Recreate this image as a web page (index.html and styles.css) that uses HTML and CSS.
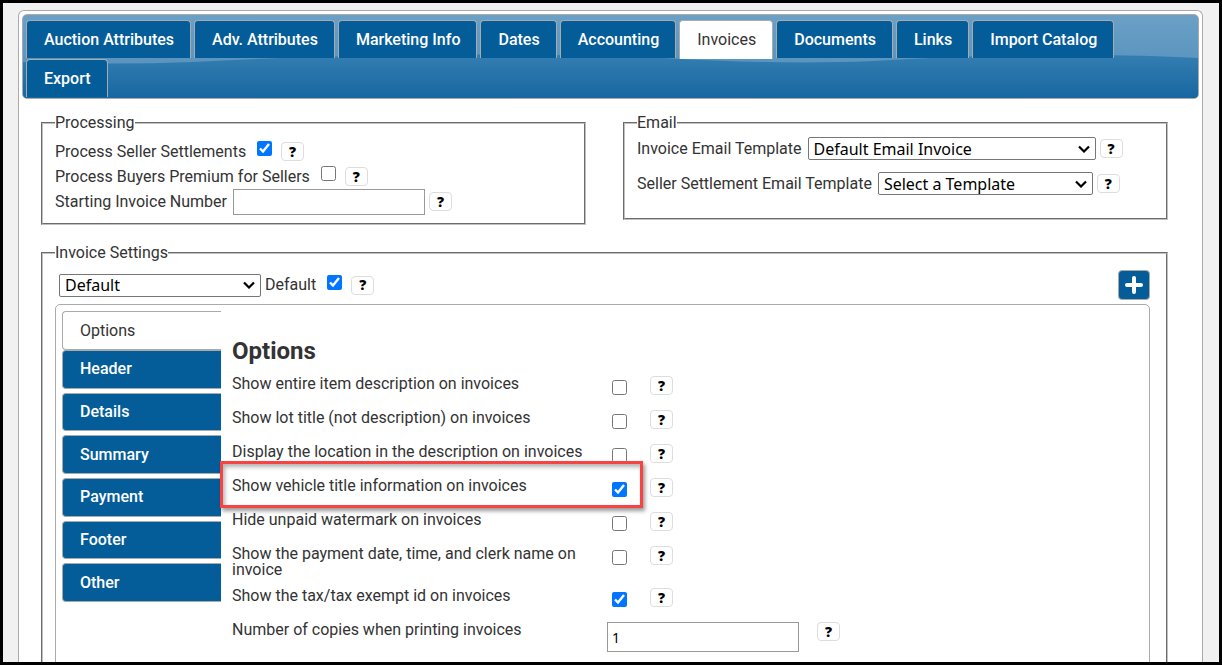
FILE: index.html
```html
<!DOCTYPE html>
<html lang="en">
  <head>
    <meta charset="UTF-8" />
    <meta name="viewport" content="width=device-width, initial-scale=1.0" />
    <title>Auction Settings - Invoices</title>
    <link rel="stylesheet" href="styles.css">
  </head>
  <body>
    <div class="panel">
      <nav class="tabs">
        <svg class="wave" viewBox="0 0 1175 83" preserveAspectRatio="none" aria-hidden="true">
          <defs>
            <linearGradient id="deep" x1="0" y1="0" x2="0" y2="1">
              <stop offset="0" stop-color="#347eb1" />
              <stop offset="1" stop-color="#1767a1" />
            </linearGradient>
          </defs>
          <path fill="url(#deep)" d="M0 47 Q90 50 170 47 Q260 42 380 40 Q520 38 640 43 Q760 50 850 46 Q960 39 1060 40 Q1120 40 1175 43 V83 H0 Z" />
        </svg>
        <a href="#">Auction Attributes</a>
        <a href="#">Adv. Attributes</a>
        <a href="#">Marketing Info</a>
        <a href="#">Dates</a>
        <a href="#">Accounting</a>
        <a href="#" class="active">Invoices</a>
        <a href="#">Documents</a>
        <a href="#">Links</a>
        <a href="#">Import Catalog</a>
        <a href="#">Export</a>
      </nav>

      <form class="content">
        <div class="columns">
          <fieldset class="processing">
            <legend>Processing</legend>
            <div class="field">
              <label for="settlements">Process Seller Settlements</label>
              <input type="checkbox" id="settlements" checked />
              <button type="button" class="help">?</button>
            </div>
            <div class="field">
              <label for="premium">Process Buyers Premium for Sellers</label>
              <input type="checkbox" id="premium" />
              <button type="button" class="help">?</button>
            </div>
            <div class="field">
              <label for="start-number">Starting Invoice Number</label>
              <input type="text" id="start-number" />
              <button type="button" class="help">?</button>
            </div>
          </fieldset>

          <fieldset class="email">
            <legend>Email</legend>
            <div class="field">
              <label for="invoice-template">Invoice Email Template</label>
              <select id="invoice-template" class="wide">
                <option>Default Email Invoice</option>
              </select>
              <button type="button" class="help">?</button>
            </div>
            <div class="field">
              <label for="seller-template">Seller Settlement Email Template</label>
              <select id="seller-template">
                <option>Select a Template</option>
              </select>
              <button type="button" class="help">?</button>
            </div>
          </fieldset>
        </div>

        <fieldset class="settings">
          <legend>Invoice Settings</legend>
          <div class="field toolbar">
            <select aria-label="Invoice settings">
              <option>Default</option>
            </select>
            <label for="is-default">Default</label>
            <input type="checkbox" id="is-default" checked />
            <button type="button" class="help">?</button>
            <button type="button" class="add" aria-label="Add">
              <svg viewBox="0 0 18 18" width="18" height="18">
                <path d="M9 2V16M2 9H16" stroke="#fff" stroke-width="4" stroke-linecap="round" />
              </svg>
            </button>
          </div>

          <div class="box">
            <nav class="side">
              <a href="#" class="active">Options</a>
              <div class="side-list">
                <a href="#">Header</a>
                <a href="#">Details</a>
                <a href="#">Summary</a>
                <a href="#">Payment</a>
                <a href="#">Footer</a>
                <a href="#">Other</a>
              </div>
            </nav>

            <div class="options">
              <h2>Options</h2>
              <div class="row">
                <label for="opt-description">Show entire item description on invoices</label>
                <input type="checkbox" id="opt-description" />
                <button type="button" class="help">?</button>
              </div>
              <div class="row">
                <label for="opt-lot">Show lot title (not description) on invoices</label>
                <input type="checkbox" id="opt-lot" />
                <button type="button" class="help">?</button>
              </div>
              <div class="row">
                <label for="opt-location">Display the location in the description on invoices</label>
                <input type="checkbox" id="opt-location" />
                <button type="button" class="help">?</button>
              </div>
              <div class="row highlight">
                <label for="opt-vehicle">Show vehicle title information on invoices</label>
                <input type="checkbox" id="opt-vehicle" checked />
                <button type="button" class="help">?</button>
              </div>
              <div class="row">
                <label for="opt-watermark">Hide unpaid watermark on invoices</label>
                <input type="checkbox" id="opt-watermark" />
                <button type="button" class="help">?</button>
              </div>
              <div class="row">
                <label for="opt-payment">Show the payment date, time, and clerk name on invoice</label>
                <input type="checkbox" id="opt-payment" />
                <button type="button" class="help">?</button>
              </div>
              <div class="row">
                <label for="opt-tax">Show the tax/tax exempt id on invoices</label>
                <input type="checkbox" id="opt-tax" checked />
                <button type="button" class="help">?</button>
              </div>
              <div class="row">
                <label for="opt-copies">Number of copies when printing invoices</label>
                <input type="text" id="opt-copies" value="1" />
                <button type="button" class="help">?</button>
              </div>
            </div>
          </div>
        </fieldset>
      </form>
    </div>
  </body>
</html>
```
FILE: styles.css
```css
*,
*::after {
  box-sizing: border-box;
}

body {
  margin: 0;
  height: 100vh;
  overflow: hidden;
  border: 3px solid #000;
  padding: 7px 16px 0 15px;
  background-color: #f1f1f1;
  color: #333;
  font-family: Roboto, "Liberation Sans", sans-serif;
  font-size: 16px;
  line-height: 16px;
}

.panel {
  height: 100%;
  overflow: hidden;
  padding: 3px;
  background-color: #fff;
  border: 1px solid #aaa;
  border-bottom: none;
  border-radius: 6px 6px 0 0;
}

/* top tabs */
.tabs {
  position: relative;
  display: flex;
  flex-wrap: wrap;
  gap: 0 3px;
  padding: 5px 3px 0;
  background: linear-gradient(#6ba0c6, #5a94bf 48px);
  border: 1px solid #aaa;
  border-radius: 5px;
  overflow: hidden;
}

.wave {
  position: absolute;
  top: 0;
  left: 0;
  width: 100%;
  height: 100%;
}

.tabs a {
  position: relative;
  height: 38px;
  margin-bottom: 1px;
  padding: 0 16px 0 17px;
  line-height: 37px;
  font-weight: 500;
  color: #fff;
  text-decoration: none;
  background-color: #045d99;
  border: 1px solid #aaa;
  border-bottom: none;
  border-radius: 4px 4px 0 0;
}

.tabs a.active {
  height: 39px;
  margin-bottom: 0;
  font-weight: 400;
  color: #333;
  background-color: #fff;
}

.content {
  padding: 16px 31px 0 19px;
}

/* fieldsets */
fieldset {
  margin: 0;
  min-width: 0;
  padding: 8px 12px 9px;
  border: 2px groove #c0c0c0;
}

legend {
  padding: 0;
}

.columns {
  display: grid;
  grid-template-columns: 1fr 1fr;
  align-items: start;
  gap: 37px;
}

.field {
  display: flex;
  align-items: center;
  gap: 4px;
}

.field label {
  margin-right: 2px;
}

.processing .field {
  height: 25px;
}

.email .field {
  height: 35px;
}

.email {
  padding-top: 0;
  padding-bottom: 17px;
}

input[type="checkbox"] {
  flex: none;
  width: 15px;
  height: 15px;
  margin: 0;
}

.field input[type="checkbox"] {
  margin: 0 5px 6px;
}

input[type="text"] {
  width: 192px;
  height: 26px;
  padding: 0 4px;
  border: 1px solid #999;
  font: 14px "Noto Sans", sans-serif;
  color: #000;
}

select {
  appearance: none;
  width: 215px;
  height: 23px;
  padding: 0 20px 0 5px;
  background: #fff url("data:image/svg+xml,%3Csvg xmlns='http://www.w3.org/2000/svg' width='12' height='8'%3E%3Cpath d='M1 1.5L6 6.5L11 1.5' fill='none' stroke='%23000' stroke-width='2.2'/%3E%3C/svg%3E") no-repeat right 5px center;
  border: 1px solid #767676;
  border-radius: 2px;
  font: 16px/20px "Noto Sans", sans-serif;
  color: #000;
}

select.wide {
  width: 288px;
}

.help {
  flex: none;
  width: 23px;
  height: 19px;
  padding: 0;
  background-color: #fff;
  border: 1px solid #ddd;
  border-radius: 4px;
  font: 800 14px/16px "Open Sans", sans-serif;
  color: #000;
  cursor: pointer;
}

/* invoice settings */
.settings {
  margin-top: 20px;
  padding-top: 9px;
  padding-right: 16px;
}

.toolbar {
  padding-left: 4px;
  margin-bottom: 4px;
}

.toolbar select {
  width: 202px;
}

.add {
  display: flex;
  align-items: center;
  justify-content: center;
  width: 32px;
  height: 30px;
  margin-left: auto;
  padding: 0;
  background-color: #045d99;
  border: 1px solid #aaa;
  border-radius: 4px;
  cursor: pointer;
}

.box {
  display: flex;
  gap: 11px;
  min-height: 400px;
  padding: 6px;
  border: 1px solid #aaa;
  border-radius: 5px;
}

.side {
  width: 159px;
}

.side a {
  display: flex;
  align-items: center;
  height: 39px;
  padding-left: 17px;
  color: #fff;
  font-weight: 500;
  text-decoration: none;
  background-color: #045d99;
  border: 1px solid #aaa;
  border-right: none;
  border-radius: 4px 0 0 4px;
}

.side a.active {
  color: #333;
  font-weight: 400;
  background-color: #fff;
}

.side-list {
  display: grid;
  grid-auto-rows: 1fr;
  gap: 4px;
  height: 252px;
}

.side-list a {
  height: auto;
}

.options h2 {
  margin: 28px 0 13px;
  font-size: 24px;
  line-height: 24px;
}

.row {
  position: relative;
  display: flex;
  align-items: flex-start;
  gap: 18px;
  min-height: 34px;
  padding-bottom: 10px;
}

.row label {
  width: 357px;
}

.row input[type="checkbox"] {
  margin: 4px 5px 0;
}

.row input[type="text"] {
  height: 30px;
}

/* red frame around the vehicle title option */
.highlight::after {
  content: "";
  position: absolute;
  top: -17px;
  left: -12px;
  width: 423px;
  height: 47px;
  border: 3px solid #f84343;
  box-shadow: 2px 3px 4px rgba(0, 0, 0, 0.4), inset 2px 3px 4px rgba(0, 0, 0, 0.3);
  pointer-events: none;
}
```
